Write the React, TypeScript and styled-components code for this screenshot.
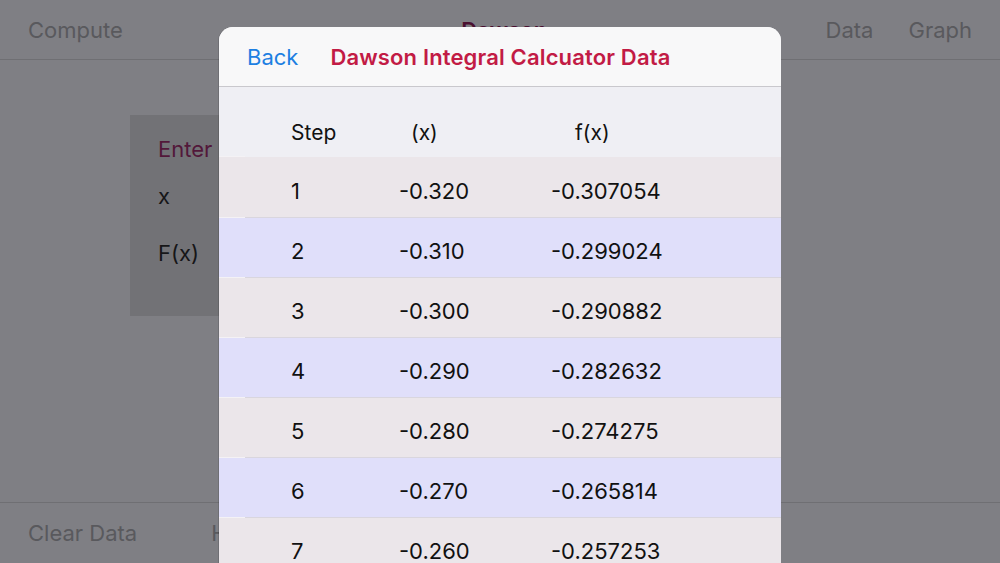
import React from "react";
import styled, { createGlobalStyle } from "styled-components";

const Global = createGlobalStyle`
  html, body { margin: 0; padding: 0; }
  body {
    width: 1000px;
    height: 563px;
    overflow: hidden;
    background: #7f7f84;
    font-family: Inter, "Noto Sans", "Liberation Sans", sans-serif;
  }
`;

const Screen = styled.div`
  position: relative;
  width: 1000px;
  height: 563px;
  overflow: hidden;
  background: #7f7f84;
  display: flex;
  flex-direction: column;
`;

const NavBar = styled.div`
  height: 60px;
  box-sizing: border-box;
  border-bottom: 1px solid #6f6f73;
  display: flex;
  align-items: center;
  padding: 0 28px;
  font-size: 22px;
  color: #59595d;
`;

const NavTitle = styled.div`
  flex: 1;
  text-align: center;
  color: #4a1030;
  font-weight: 600;
  padding-left: 60px;
`;

const NavRight = styled.div`
  display: flex;
  gap: 35px;
`;

const Body = styled.div`
  flex: 1;
  padding: 55px 0 0 130px;
`;

const InputCard = styled.div`
  width: 300px;
  height: 201px;
  background: #727276;
  box-sizing: border-box;
  padding: 21px 28px;
  display: flex;
  flex-direction: column;
  font-size: 22px;
  color: #161618;
`;

const CardHeading = styled.div`
  color: #52183a;
  margin-bottom: 21px;
`;

const CardLabel = styled.div`
  margin-bottom: 31px;
`;

const BottomBar = styled.div`
  height: 61px;
  box-sizing: border-box;
  border-top: 1px solid #6f6f73;
  display: flex;
  align-items: center;
  padding: 0 28px 0 28px;
  gap: 74px;
  font-size: 22px;
  color: #59595d;
`;

const Modal = styled.div`
  position: absolute;
  left: 219px;
  top: 27px;
  width: 562px;
  height: 560px;
  border-radius: 14px 14px 0 0;
  overflow: hidden;
  background: #efeff4;
  box-shadow: -1px 0 0 rgba(0, 0, 0, 0.12);
  display: flex;
  flex-direction: column;
`;

const ModalHeader = styled.div`
  height: 60px;
  flex-shrink: 0;
  box-sizing: border-box;
  background: #f8f8f9;
  border-bottom: 1px solid #c9c8cd;
  display: flex;
  align-items: center;
  padding: 0 0 0 28px;
  gap: 32px;
  font-size: 22px;
`;

const BackButton = styled.span`
  color: #1d7fe2;
`;

const ModalTitle = styled.span`
  color: #c21b45;
  font-weight: 600;
  letter-spacing: 0.15px;
`;

const HeaderRow = styled.div`
  height: 70px;
  flex-shrink: 0;
  display: grid;
  grid-template-columns: 72px 120px 164px 1fr;
  align-items: end;
  padding-bottom: 12px;
  box-sizing: border-box;
  font-size: 21px;
  color: #111;
`;

const Row = styled.div<{ $alt: boolean }>`
  position: relative;
  height: 60px;
  flex-shrink: 0;
  box-sizing: border-box;
  background: ${(p) => (p.$alt ? "#e0dffa" : "#ebe6ea")};
  display: grid;
  grid-template-columns: 72px 108px 152px 1fr;
  align-items: center;
  padding-top: 7px;
  font-size: 22px;
  color: #111;
  border-top: 1px solid #d9d6de;
  &:first-of-type {
    border-top: none;
  }
  &::before {
    content: "";
    position: absolute;
    left: 0;
    top: -1px;
    width: 26px;
    height: 1px;
    background: #f4f2f5;
  }
`;

const Cell = styled.span<{ $col: number }>`
  grid-column: ${(p) => p.$col};
`;

const rows = [
  ["1", "-0.320", "-0.307054"],
  ["2", "-0.310", "-0.299024"],
  ["3", "-0.300", "-0.290882"],
  ["4", "-0.290", "-0.282632"],
  ["5", "-0.280", "-0.274275"],
  ["6", "-0.270", "-0.265814"],
  ["7", "-0.260", "-0.257253"],
];

const Rows = styled.div`
  display: flex;
  flex-direction: column;
`;

export default function App() {
  return (
    <>
      <Global />
      <Screen>
        <NavBar>
          <span>Compute</span>
          <NavTitle>Dawson</NavTitle>
          <NavRight>
            <span>Data</span>
            <span>Graph</span>
          </NavRight>
        </NavBar>
        <Body>
          <InputCard>
            <CardHeading>Enter</CardHeading>
            <CardLabel>x</CardLabel>
            <CardLabel>F(x)</CardLabel>
          </InputCard>
        </Body>
        <BottomBar>
          <span>Clear Data</span>
          <span>Help</span>
        </BottomBar>
        <Modal>
          <ModalHeader>
            <BackButton>Back</BackButton>
            <ModalTitle>Dawson Integral Calcuator Data</ModalTitle>
          </ModalHeader>
          <HeaderRow>
            <Cell $col={2}>Step</Cell>
            <Cell $col={3}>(x)</Cell>
            <Cell $col={4}>f(x)</Cell>
          </HeaderRow>
          <Rows>
            {rows.map((r, i) => (
              <Row key={r[0]} $alt={i % 2 === 1}>
                <Cell $col={2}>{r[0]}</Cell>
                <Cell $col={3}>{r[1]}</Cell>
                <Cell $col={4}>{r[2]}</Cell>
              </Row>
            ))}
          </Rows>
        </Modal>
      </Screen>
    </>
  );
}
